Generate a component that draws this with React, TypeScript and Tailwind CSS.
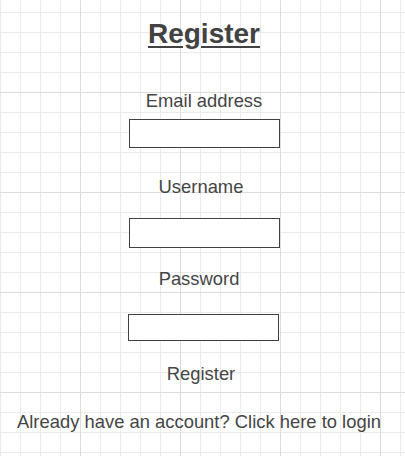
const fields = [
  { label: "Email address", type: "email", top: "mt-[40px]", gap: "mt-[8px]", h: "h-[29px]", shift: "", labelShift: "" },
  { label: "Username", type: "text", top: "mt-[28px]", gap: "mt-[21px]", h: "h-[30px]", shift: "", labelShift: "-translate-x-[3px]" },
  { label: "Password", type: "password", top: "mt-[20px]", gap: "mt-[25px]", h: "h-[27px]", shift: "-translate-x-px", labelShift: "-translate-x-[5px]" },
];

const App = () => {
  return (
    <div className="min-h-[456px] w-full bg-white bg-[linear-gradient(#dcdcdc_1px,transparent_1px),linear-gradient(90deg,#dcdcdc_1px,transparent_1px),linear-gradient(#ebebeb_1px,transparent_1px),linear-gradient(90deg,#ebebeb_1px,transparent_1px)] bg-[size:100px_100px,100px_100px,20px_20px,20px_20px] bg-[position:0_92px,80px_0,0_12px,0_0] font-['Liberation_Sans',Arial,sans-serif] text-[#454545]">
      <div className="flex flex-col items-center pl-[3px]">
        <h1 className="mt-[18px] text-[28px] leading-[32px] font-bold underline underline-offset-[3px] text-[#424242]">
          Register
        </h1>
        <form className="flex flex-col items-center" onSubmit={(e) => e.preventDefault()}>
          {fields.map((f) => (
            <div key={f.label} className="flex flex-col items-center">
              <label className={`${f.top} ${f.labelShift} text-[18.4px] leading-[21px]`}>{f.label}</label>
              <input
                type={f.type}
                className={`${f.gap} ${f.h} ${f.shift} w-[151px] border border-[#404040] bg-white outline-none`}
              />
            </div>
          ))}
          <button type="submit" className="mt-[22px] -translate-x-[3px] text-[18.4px] leading-[21px] cursor-pointer">
            Register
          </button>
        </form>
        <p className="mt-[27px] text-[18.4px] leading-[21px] -translate-x-[5px]">
          Already have an account? Click here to login
        </p>
      </div>
    </div>
  );
};

export default App;
